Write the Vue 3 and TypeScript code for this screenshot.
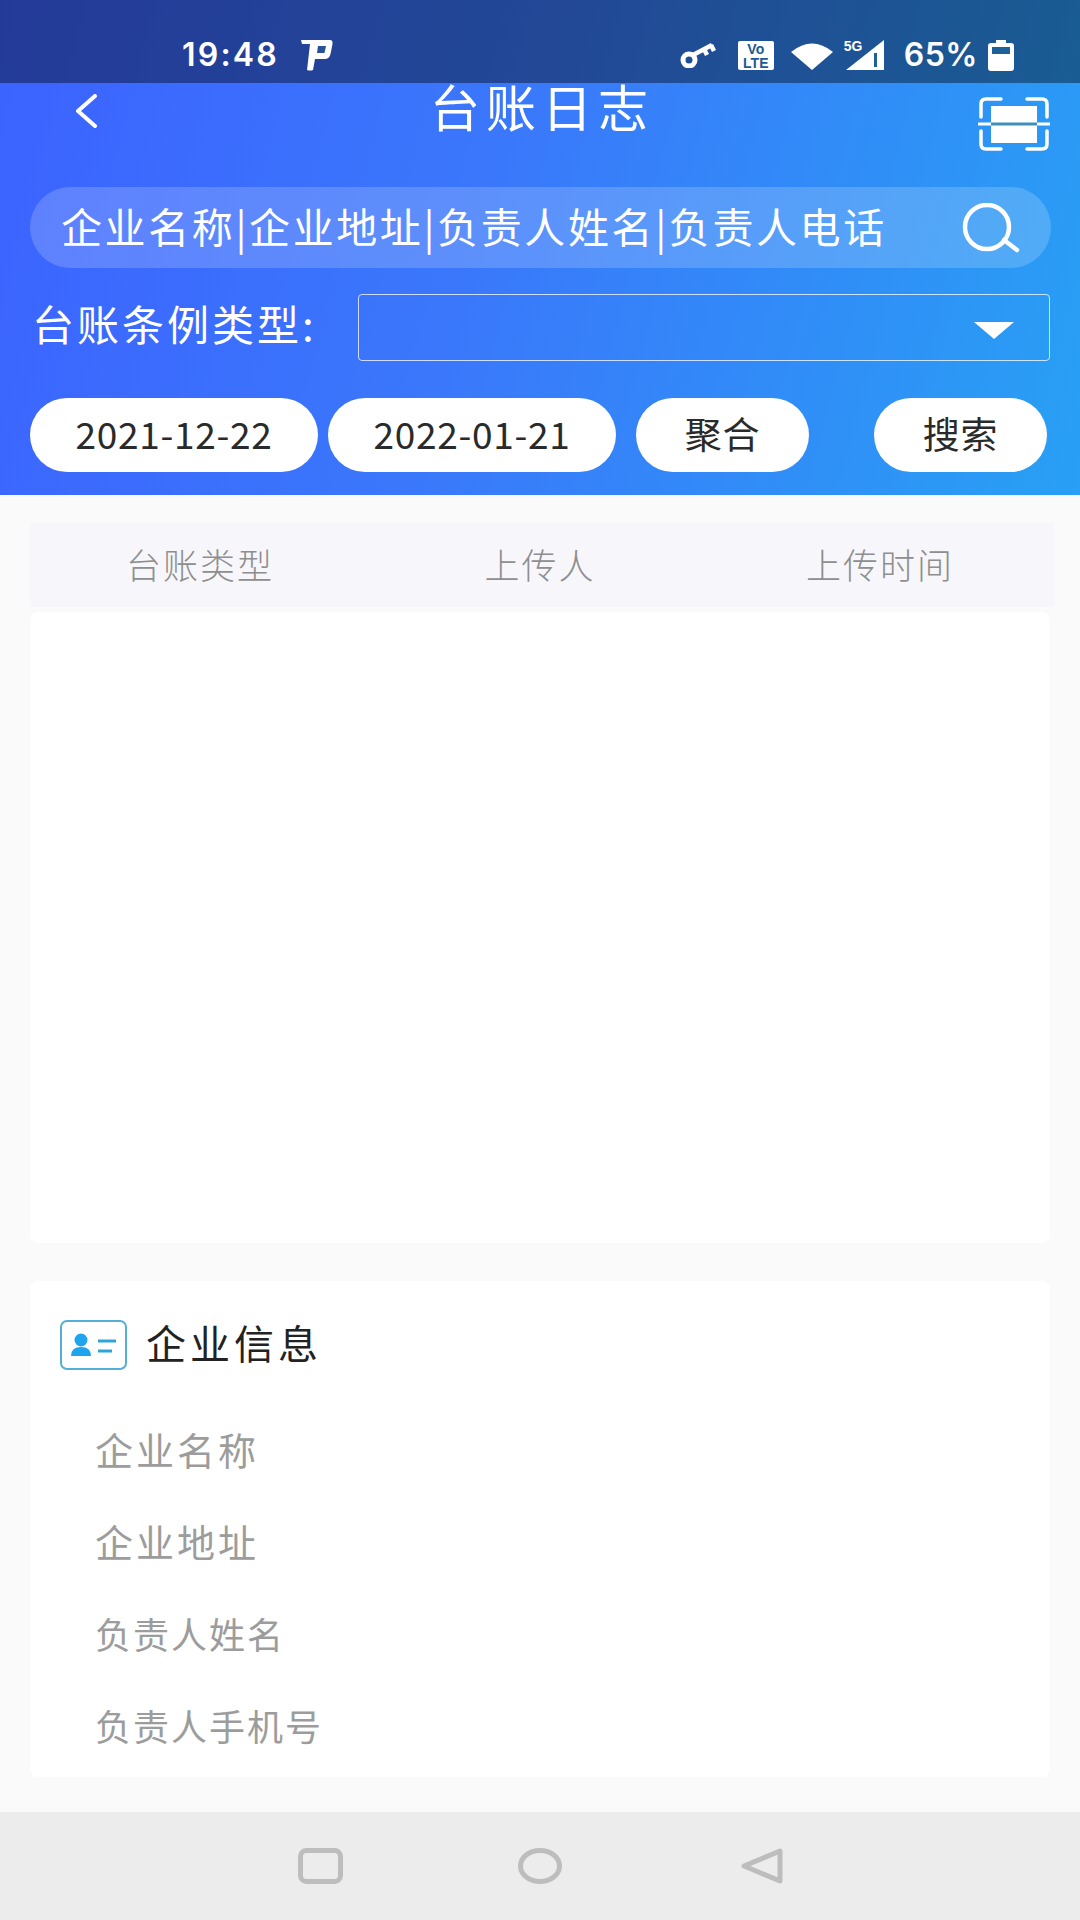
<script setup lang="ts">
const columns = ['台账类型', '上传人', '上传时间']
const infoRows = [
  { label: '企业名称', wide: true },
  { label: '企业地址', wide: true },
  { label: '负责人姓名', wide: false },
  { label: '负责人手机号', wide: false }
]
</script>

<template>
  <div class="page">
    <header class="top">
      <div class="status">
        <span class="clock">19:48</span>
        <svg class="ic-p" viewBox="0 0 33 32" width="33" height="32">
          <path d="M1 1h29q3 0 2.500 4l-2 10q-1 5-6 5H15l-2 11q-3 1-6 0l3-26H2z" fill="#fff" />
          <path d="M18 7h8l-1.500 7H17z" fill="#27529a" />
        </svg>
        <span class="spring"></span>
        <svg class="ic-key" viewBox="0 0 39 26" width="39" height="26">
          <circle cx="9" cy="18" r="6" fill="none" stroke="#fff" stroke-width="5" />
          <path d="M13 13 32 3M24 7l3 6M31 3l3 6" stroke="#fff" stroke-width="4.500" fill="none" />
        </svg>
        <div class="volte"><span>Vo</span><span>LTE</span></div>
        <svg class="ic-wifi" viewBox="0 0 44 29" width="44" height="29">
          <path d="M1 11Q22-6 43 11L22 29z" fill="#fff" />
        </svg>
        <div class="signal">
          <span class="five-g">5G</span>
          <svg viewBox="0 0 40 30" width="40" height="30">
            <path d="M2 30 40 0v30z" fill="#fff" />
            <path d="M30 13h3v14h-3z" fill="#1c6298" />
          </svg>
        </div>
        <span class="battery-text">65%</span>
        <svg class="ic-battery" viewBox="0 0 26 31" width="26" height="31">
          <path d="M8 0h10v3h5q3 0 3 3v22q0 3-3 3H3q-3 0-3-3V6q0-3 3-3h5z" fill="#fff" />
          <path d="M4 7h18v7H4z" fill="#1c6298" />
        </svg>
      </div>

      <div class="head">
        <div class="nav">
          <svg class="back" viewBox="0 0 24 34" width="24" height="34">
            <path d="M21 2 4 17l17 15" fill="none" stroke="#fff" stroke-width="4" stroke-linecap="round" stroke-linejoin="round" />
          </svg>
          <h1 class="title">台账日志</h1>
          <svg class="scan" viewBox="0 0 72 54" width="72" height="54">
            <path d="M23 2H8Q3 2 3 7v13M49 2h15q5 0 5 5v13M23 52H8q-5 0-5-5V34M49 52h15q5 0 5-5V34" fill="none" stroke="#fff" stroke-width="3.500" stroke-linecap="round" />
            <path d="M13 9h46v37H13z" fill="#fff" />
            <path d="M0 27h72" stroke="#fff" stroke-width="3" />
            <path d="M13 27h46" stroke="#3f8fb8" stroke-width="3" />
          </svg>
        </div>

        <div class="search">
          <span class="search-text">企业名称|企业地址|负责人姓名|负责人电话</span>
          <svg class="search-ic" viewBox="0 0 60 50" width="60" height="50">
            <circle cx="26" cy="24" r="22" fill="none" stroke="#fff" stroke-width="4.500" />
            <path d="M43 37 56 47" stroke="#fff" stroke-width="4.500" stroke-linecap="round" />
          </svg>
        </div>

        <div class="type-row">
          <span class="type-label">台账条例类型:</span>
          <div class="select"><i class="caret"></i></div>
        </div>

        <div class="btn-row">
          <button class="pill date">2021-12-22</button>
          <button class="pill date">2022-01-21</button>
          <button class="pill short merge">聚合</button>
          <button class="pill short find">搜索</button>
        </div>
      </div>
    </header>

    <main class="body">
      <div class="thead">
        <span v-for="c in columns" :key="c">{{ c }}</span>
      </div>
      <div class="tbody"></div>

      <section class="card">
        <div class="card-head">
          <svg viewBox="0 0 67 50" width="67" height="50">
            <rect x="1" y="1" width="65" height="48" rx="6" fill="#fff" stroke="#55aed6" stroke-width="2" />
            <circle cx="21" cy="20" r="6.500" fill="#1fa4ee" />
            <path d="M11 36q0-9 10-9t10 9z" fill="#1fa4ee" />
            <path d="M38 21h18M38 31h14" stroke="#2da5d8" stroke-width="3" />
          </svg>
          <h2>企业信息</h2>
        </div>
        <div v-for="r in infoRows" :key="r.label" class="info-row" :class="{ wide: r.wide }">{{ r.label }}</div>
      </section>
    </main>

    <footer class="navbar">
      <svg class="nav-square" viewBox="0 0 45 36" width="45" height="36">
        <rect x="2.500" y="2.500" width="40" height="31" rx="6" fill="none" stroke="#bdbdbd" stroke-width="5" />
      </svg>
      <svg class="nav-circle" viewBox="0 0 44 36" width="44" height="36">
        <ellipse cx="22" cy="18" rx="19.500" ry="15.500" fill="none" stroke="#bdbdbd" stroke-width="5" />
      </svg>
      <svg class="nav-back" viewBox="0 0 42 36" width="42" height="36">
        <path d="M39 3v30L3 18z" fill="none" stroke="#bdbdbd" stroke-width="5" stroke-linejoin="round" />
      </svg>
    </footer>
  </div>
</template>

<style>
html,
body {
  margin: 0;
  background: #fafafa;
}
</style>

<style scoped>
.page {
  width: 1080px;
  height: 1920px;
  display: flex;
  flex-direction: column;
  overflow: hidden;
  background: #fafafa;
  font-family: "Noto Sans CJK SC", "Noto Sans", sans-serif;
}

.top {
  background: linear-gradient(105deg, #3c62ff 0%, #3a78fb 45%, #28a0f4 100%);
  height: 495px;
  color: #fff;
}

.status {
  height: 83px;
  box-sizing: border-box;
  padding: 36px 66px 0 182px;
  display: flex;
  align-items: flex-start;
  background: rgba(0, 0, 0, 0.4);
  font-family: Inter, sans-serif;
  font-weight: 600;
  font-size: 32px;
  line-height: 38px;
}
.clock {
  letter-spacing: 2.200px;
}
.ic-p {
  margin: 3px 0 0 21px;
}
.spring {
  flex: 1;
}
.ic-key {
  margin-top: 6px;
}
.volte {
  width: 36px;
  height: 29px;
  margin: 5px 16px 0 19px;
  border-radius: 2px;
  background: #fff;
  color: #1c5a92;
  font-family: "Liberation Sans", sans-serif;
  font-size: 14px;
  font-weight: 700;
  line-height: 14px;
  text-align: center;
  display: flex;
  flex-direction: column;
  justify-content: center;
}
.ic-wifi {
  margin-top: 5px;
}
.signal {
  position: relative;
  margin: 4px 0 0 10px;
  height: 30px;
}
.five-g {
  position: absolute;
  left: 0;
  top: -1px;
  font-family: "Liberation Sans", sans-serif;
  font-size: 14px;
  line-height: 14px;
  font-weight: 700;
}
.battery-text {
  margin-left: 20px;
  letter-spacing: 0.500px;
}
.ic-battery {
  margin: 4px 0 0 10px;
}

.head {
  padding: 0 30px;
}
.nav {
  height: 104px;
  display: flex;
  justify-content: space-between;
  align-items: flex-start;
}
.back {
  margin: 11px 0 0 44px;
}
.title {
  flex: 1;
  margin: -5px 0 0;
  padding-left: 8px;
  font-size: 50px;
  line-height: 54px;
  font-weight: 400;
  letter-spacing: 6px;
  text-align: center;
}
.scan {
  margin-top: 14px;
}

.search {
  height: 81px;
  width: 1021px;
  border-radius: 41px;
  background: rgba(255, 255, 255, 0.18);
  display: flex;
  align-items: center;
  justify-content: space-between;
  padding: 0 30px 0 31px;
  box-sizing: border-box;
}
.search-text {
  font-size: 41px;
  line-height: 54px;
  letter-spacing: 2.600px;
  white-space: nowrap;
  margin-top: -6px;
}
.type-row {
  display: flex;
  align-items: center;
  margin-top: 26px;
  height: 67px;
}
.type-label {
  width: 328px;
  padding: 0 0 10px 2px;
  box-sizing: border-box;
  font-size: 42px;
  letter-spacing: 3px;
  white-space: nowrap;
}
.select {
  width: 692px;
  height: 67px;
  box-sizing: border-box;
  border: 1px solid rgba(255, 255, 255, 0.75);
  border-radius: 4px;
  display: flex;
  align-items: center;
  justify-content: flex-end;
  padding: 6px 35px 0 0;
}
.caret {
  width: 0;
  height: 0;
  border-left: 20px solid transparent;
  border-right: 20px solid transparent;
  border-top: 17px solid #fff;
}
.btn-row {
  display: flex;
  margin-top: 37px;
}
.pill {
  height: 74px;
  border: 0;
  border-radius: 37px;
  background: #fff;
  color: #2a2a2a;
  font-family: inherit;
  font-size: 37px;
  letter-spacing: 0.700px;
  padding: 0 0 4px;
}
.date {
  width: 288px;
  margin-right: 10px;
}
.short {
  width: 173px;
}
.merge {
  margin: 0 65px 0 10px;
}

.body {
  flex: 1;
  padding: 28px 30px 0;
}
.thead {
  height: 84px;
  margin: 0 -4px 5px 0;
  padding: 0 4px 4px 0;
  box-sizing: border-box;
  display: grid;
  grid-template-columns: 1fr 1fr 1fr;
  align-items: center;
  justify-items: center;
  background: #f7f7fb;
  color: #8e8e8e;
  font-size: 35px;
  font-weight: 300;
  letter-spacing: 2px;
}
.tbody {
  height: 631px;
  background: #fff;
  border-radius: 8px;
}
.card {
  margin-top: 38px;
  height: 496px;
  box-sizing: border-box;
  padding: 39px 30px 0;
  background: #fff;
  border-radius: 8px;
}
.card-head {
  display: flex;
  align-items: center;
  height: 50px;
  margin-bottom: 33px;
}
.card-head h2 {
  margin: -6px 0 0 19px;
  font-size: 40px;
  font-weight: 400;
  letter-spacing: 4px;
  color: #222;
}
.info-row {
  height: 92px;
  line-height: 92px;
  padding-left: 35px;
  color: #9c9c9c;
  font-size: 36px;
  letter-spacing: 2px;
}
.info-row.wide {
  font-size: 38px;
  letter-spacing: 3px;
}

.navbar {
  height: 108px;
  box-sizing: border-box;
  background: #ececec;
  display: flex;
  align-items: flex-start;
  padding: 36px 0 0 298px;
}
.nav-circle {
  margin-left: 175px;
}
.nav-back {
  margin-left: 179px;
}
</style>
